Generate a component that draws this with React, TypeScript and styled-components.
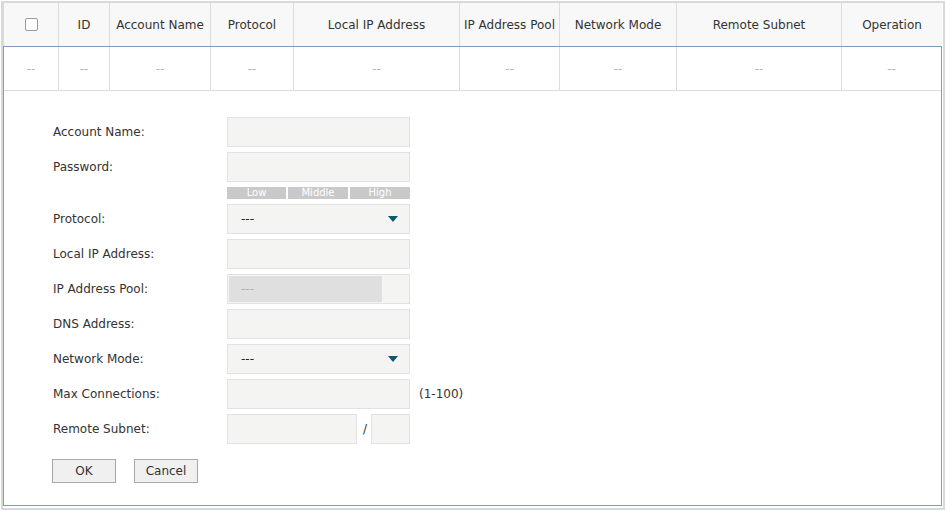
import styled, { createGlobalStyle } from 'styled-components'

const GlobalStyle = createGlobalStyle`
  html, body {
    margin: 0;
    padding: 0;
    background: #ffffff;
    font-family: "DejaVu Sans", Verdana, sans-serif;
    font-size: 12px;
    color: #333333;
  }
`

const columns = [
  { key: 'check', title: '', width: 54 },
  { key: 'id', title: 'ID', width: 51 },
  { key: 'name', title: 'Account Name', width: 101 },
  { key: 'protocol', title: 'Protocol', width: 83 },
  { key: 'localIp', title: 'Local IP Address', width: 166 },
  { key: 'pool', title: 'IP Address Pool', width: 100 },
  { key: 'mode', title: 'Network Mode', width: 117 },
  { key: 'subnet', title: 'Remote Subnet', width: 165 },
  { key: 'op', title: 'Operation', width: 100 },
]

// last column takes what is left
const gridTemplate = columns
  .map((c, i) => (i === columns.length - 1 ? '1fr' : `${c.width}px`))
  .join(' ')

const Panel = styled.div`
  margin: 1px 0 0 1px;
  width: 944px;
  height: 509px;
  border: 2px solid #d9d9d9;
  padding: 0 1px 2px 0;
  box-sizing: border-box;
`

const HeaderRow = styled.div`
  display: grid;
  grid-template-columns: ${gridTemplate};
  height: 43px;
  background: #f8f8f8;
  border-left: 1px solid #d9d9d9;
`

const Cell = styled.div<{ $first?: boolean; $muted?: boolean }>`
  display: flex;
  align-items: center;
  justify-content: center;
  border-left: ${(p) => (p.$first ? 'none' : '1px solid #dcdcdc')};
  color: ${(p) => (p.$muted ? '#b5b5b5' : '#333333')};
  white-space: nowrap;
  overflow: hidden;
`

const CheckBox = styled.span`
  width: 11px;
  height: 11px;
  border: 1px solid #9a9a9a;
  border-radius: 2px;
  background: #ffffff;
`

const EditBlock = styled.div`
  border: 1px solid #7c9bbd;
  height: 460px;
  box-sizing: border-box;
`

const DataRow = styled.div`
  display: grid;
  grid-template-columns: ${gridTemplate};
  height: 43px;
  border-bottom: 1px solid #dcdcdc;
`

const Form = styled.div`
  display: flex;
  flex-direction: column;
  gap: 5px;
  padding: 26px 0 0 49px;
`

const FieldRow = styled.div<{ $short?: boolean }>`
  display: grid;
  grid-template-columns: 174px auto;
  align-items: center;
  height: ${(p) => (p.$short ? '12px' : '30px')};
`

const Label = styled.label`
  color: #333333;
`

const Control = styled.div`
  display: flex;
  align-items: center;
  gap: 8px;
`

const SubnetGroup = styled.div`
  display: flex;
  align-items: center;
`

const Input = styled.div<{ $w?: number }>`
  width: ${(p) => p.$w ?? 183}px;
  height: 30px;
  box-sizing: border-box;
  background: #f4f4f3;
  border: 1px solid #e2e2e2;
  display: flex;
  align-items: center;
`

const SelectValue = styled.span`
  padding-left: 13px;
  flex: 1;
  color: #222222;
`

const Caret = styled.svg`
  margin-right: 11px;
`

const DisabledBox = styled.div`
  margin: 1px;
  width: 153px;
  height: 26px;
  background: #dfdfdf;
  color: #b0b0b0;
  display: flex;
  align-items: center;
  padding-left: 12px;
  box-sizing: border-box;
`

const Strength = styled.div`
  display: grid;
  grid-template-columns: 59px 60px 60px;
  gap: 2px;
  width: 183px;
`

const StrengthSeg = styled.span`
  background: #c9c9c9;
  color: #ffffff;
  font-size: 10px;
  height: 12px;
  line-height: 12px;
  text-align: center;
`

const Hint = styled.span`
  margin-left: 1px;
  color: #333333;
`

const Slash = styled.span`
  width: 14px;
  padding-left: 2px;
  box-sizing: border-box;
  text-align: center;
`

const Buttons = styled.div`
  display: flex;
  gap: 18px;
  margin-top: 10px;
  margin-left: -1px;
`

const Button = styled.button`
  width: 64px;
  height: 24px;
  background: #f0f0f0;
  border: 1px solid #a8a8a8;
  font-family: inherit;
  font-size: 12px;
  color: #333333;
  padding: 0;
`

function Select() {
  return (
    <Input>
      <SelectValue>---</SelectValue>
      <Caret width="10" height="7" viewBox="0 0 10 7">
        <path d="M0 0 H10 L5 6 Z" fill="#0b5a6c" />
      </Caret>
    </Input>
  )
}

export default function App() {
  return (
    <>
      <GlobalStyle />
      <Panel>
        <HeaderRow>
          {columns.map((c, i) => (
            <Cell key={c.key} $first={i === 0}>
              {i === 0 ? <CheckBox /> : c.title}
            </Cell>
          ))}
        </HeaderRow>
        <EditBlock>
          <DataRow>
            {columns.map((c, i) => (
              <Cell key={c.key} $first={i === 0} $muted>
                --
              </Cell>
            ))}
          </DataRow>
          <Form>
            <FieldRow>
              <Label>Account Name:</Label>
              <Input />
            </FieldRow>
            <FieldRow>
              <Label>Password:</Label>
              <Input />
            </FieldRow>
            <FieldRow $short>
              <span />
              <Strength>
                <StrengthSeg>Low</StrengthSeg>
                <StrengthSeg>Middle</StrengthSeg>
                <StrengthSeg>High</StrengthSeg>
              </Strength>
            </FieldRow>
            <FieldRow>
              <Label>Protocol:</Label>
              <Select />
            </FieldRow>
            <FieldRow>
              <Label>Local IP Address:</Label>
              <Input />
            </FieldRow>
            <FieldRow>
              <Label>IP Address Pool:</Label>
              <Input>
                <DisabledBox>---</DisabledBox>
              </Input>
            </FieldRow>
            <FieldRow>
              <Label>DNS Address:</Label>
              <Input />
            </FieldRow>
            <FieldRow>
              <Label>Network Mode:</Label>
              <Select />
            </FieldRow>
            <FieldRow>
              <Label>Max Connections:</Label>
              <Control>
                <Input />
                <Hint>(1-100)</Hint>
              </Control>
            </FieldRow>
            <FieldRow>
              <Label>Remote Subnet:</Label>
              <SubnetGroup>
                <Input $w={130} />
                <Slash>/</Slash>
                <Input $w={39} />
              </SubnetGroup>
            </FieldRow>
            <Buttons>
              <Button>OK</Button>
              <Button>Cancel</Button>
            </Buttons>
          </Form>
        </EditBlock>
      </Panel>
    </>
  )
}
